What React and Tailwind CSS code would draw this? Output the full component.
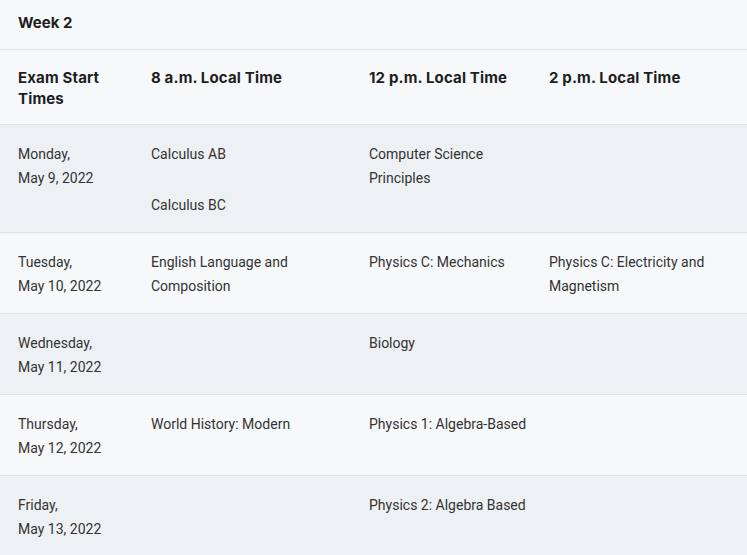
export default function App() {
  const rows = [
    { day: "Monday,", date: "May 9, 2022", am: ["Calculus AB", "Calculus BC"], noon: "Computer Science Principles", pm: "", shade: true },
    { day: "Tuesday,", date: "May 10, 2022", am: ["English Language and Composition"], noon: "Physics C: Mechanics", pm: "Physics C: Electricity and Magnetism", shade: false },
    { day: "Wednesday,", date: "May 11, 2022", am: [], noon: "Biology", pm: "", shade: true },
    { day: "Thursday,", date: "May 12, 2022", am: ["World History: Modern"], noon: "Physics 1: Algebra-Based", pm: "", shade: false },
    { day: "Friday,", date: "May 13, 2022", am: [], noon: "Physics 2: Algebra Based", pm: "", shade: true },
  ];

  const cols = "grid grid-cols-[133px_218px_180px_216px]";

  return (
    <div className="w-[747px] h-[555px] overflow-hidden bg-[#f7f8fa] font-['Roboto',sans-serif] text-[14px] text-[#333]">
      <div className="h-[50px] border-b border-[#dfe1e4] pl-[18px] flex items-center font-['Inter',sans-serif] font-bold text-[15px] text-[#1e1e1e] pb-[2px]">
        Week 2
      </div>
      <div className={`${cols} border-b border-[#dfe1e4] pt-[17px] pb-[15px] font-['Inter',sans-serif] font-bold text-[15px] tracking-[0.15px] leading-[21px] text-[#1e1e1e]`}>
        <div className="pl-[18px] pr-[16px]">Exam Start Times</div>
        <div className="pl-[18px] pr-[16px]">8 a.m. Local Time</div>
        <div className="pl-[18px] pr-[4px]">12 p.m. Local Time</div>
        <div className="pl-[18px] pr-[16px]">2 p.m. Local Time</div>
      </div>
      {rows.map((r) => (
        <div key={r.date} className={`${cols} border-b border-[#dfe1e4] pt-[17px] pb-[15px] leading-[24px] ${r.shade ? "bg-[#eef1f3]" : "bg-[#f7f8fa]"}`}>
          <div className="pl-[18px] pr-[10px]">
            <div>{r.day}</div>
            <div>{r.date}</div>
          </div>
          <div className="pl-[18px] pr-[16px]">
            {r.am.map((a, i) => (
              <div key={a} className={i > 0 ? "mt-[27px]" : ""}>{a}</div>
            ))}
          </div>
          <div className="pl-[18px] pr-[2px]">{r.noon}</div>
          <div className="pl-[18px] pr-[16px]">{r.pm}</div>
        </div>
      ))}
    </div>
  );
}
